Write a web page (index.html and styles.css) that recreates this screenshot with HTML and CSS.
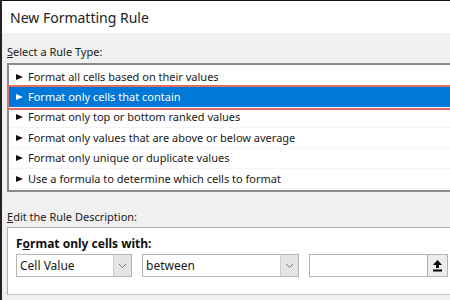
FILE: index.html
```html
<!DOCTYPE html>
<html lang="en">
<head>
    <meta charset="UTF-8">
    <title>New Formatting Rule</title>
    <link rel="stylesheet" href="styles.css">
</head>
<body>
    <div class="dialog">
        <div class="titlebar">New Formatting Rule</div>
        <div class="content">
            <div class="label"><u>S</u>elect a Rule Type:</div>
            <ul class="listbox">
                <li><span class="arrow"></span>Format all cells based on their values</li>
                <li class="selected"><span class="arrow"></span>Format only cells that contain</li>
                <li><span class="arrow"></span>Format only top or bottom ranked values</li>
                <li><span class="arrow"></span>Format only values that are above or below average</li>
                <li><span class="arrow"></span>Format only unique or duplicate values</li>
                <li><span class="arrow"></span>Use a formula to determine which cells to format</li>
            </ul>
            <div class="label edit"><u>E</u>dit the Rule Description:</div>
            <div class="group">
                <div class="group-title">F<u>o</u>rmat only cells with:</div>
                <div class="controls">
                    <div class="select first">
                        <span>Cell Value</span>
                        <span class="drop">
                            <svg width="9" height="6" viewBox="0 0 9 6"><path d="M1 1 L4.5 4.5 L8 1" fill="none" stroke="#777" stroke-width="1"/></svg>
                        </span>
                    </div>
                    <div class="select second">
                        <span>between</span>
                        <span class="drop">
                            <svg width="9" height="6" viewBox="0 0 9 6"><path d="M1 1 L4.5 4.5 L8 1" fill="none" stroke="#777" stroke-width="1"/></svg>
                        </span>
                    </div>
                    <div class="select range">
                        <span></span>
                        <span class="pick">
                            <svg width="11" height="13" viewBox="0 0 11 13"><path d="M5.5 1 L10 6 L7 6 L7 9 L4 9 L4 6 L1 6 Z" fill="#000"/><rect x="1" y="10.5" width="9" height="2" fill="#000"/></svg>
                        </span>
                    </div>
                </div>
            </div>
        </div>
    </div>
</body>
</html>
```

FILE: styles.css
```css
html, body {
    margin: 0;
    height: 100%;
    overflow: hidden;
}
body {
    font-family: "Noto Sans", "Open Sans", sans-serif;
    font-size: 11px;
    color: #1a1a1a;
    background: #f0f0f0;
}
.dialog {
    height: 100%;
    border-top: 1px solid #111;
    border-left: 2px solid #222;
    box-sizing: border-box;
}
.titlebar {
    height: 32px;
    line-height: 33px;
    background: #fff;
    padding-left: 8px;
    font-size: 14px;
    color: #222;
}
.content {
    padding-left: 5px;
}
.label {
    margin-top: 11px;
    line-height: 16px;
}
.label u {
    text-decoration-thickness: 1px;
}
.listbox {
    list-style: none;
    margin: 3px 0 0 0;
    padding: 2px 0 1px 0;
    width: 460px;
    background: #fff;
    border: 2px solid #8a8a8a;
    border-right: none;
}
.listbox li {
    height: 20.4px;
    line-height: 20px;
    padding-left: 7px;
    display: flex;
    align-items: center;
    border-bottom: 1px solid #f4f4f4;
    box-sizing: border-box;
}
.listbox li.selected {
    background: #0078d7;
    color: #fff;
    outline: 2px solid #df6d68;
    outline-offset: 0;
}
.arrow {
    width: 0;
    height: 0;
    border-left: 7px solid #111;
    border-top: 3px solid transparent;
    border-bottom: 3px solid transparent;
    margin-right: 5px;
}
.selected .arrow {
    border-left-color: #fff;
}
.label.edit {
    margin-top: 17px;
}
.group {
    margin-top: 2px;
    width: 460px;
    height: 68px;
    background: #fff;
    border-top: 1px solid #b0b0b0;
    border-left: 1px solid #b0b0b0;
    border-bottom: 1px solid #c8c8c8;
    padding: 8px 0 0 8px;
    box-sizing: border-box;
}
.group-title {
    font-size: 12px;
    font-weight: bold;
    line-height: 16px;
    color: #111;
}
.controls {
    display: flex;
    gap: 10px;
    margin-top: 2px;
}
.select {
    height: 23px;
    border: 1px solid #b4b4b4;
    background: #fff;
    box-sizing: border-box;
    display: flex;
    justify-content: space-between;
    align-items: stretch;
}
.select span:first-child {
    padding-left: 3px;
    line-height: 21px;
    font-size: 12px;
}
.select.first {
    width: 116px;
}
.select.second {
    width: 157px;
}
.select.range {
    width: 139px;
}
.drop {
    width: 17px;
    background: #e5e5e5;
    border-left: 1px solid #cfcfcf;
    display: flex;
    align-items: center;
    justify-content: center;
}
.pick {
    width: 19px;
    background: #ececec;
    border-left: 1px solid #adadad;
    display: flex;
    align-items: center;
    justify-content: center;
}
```
